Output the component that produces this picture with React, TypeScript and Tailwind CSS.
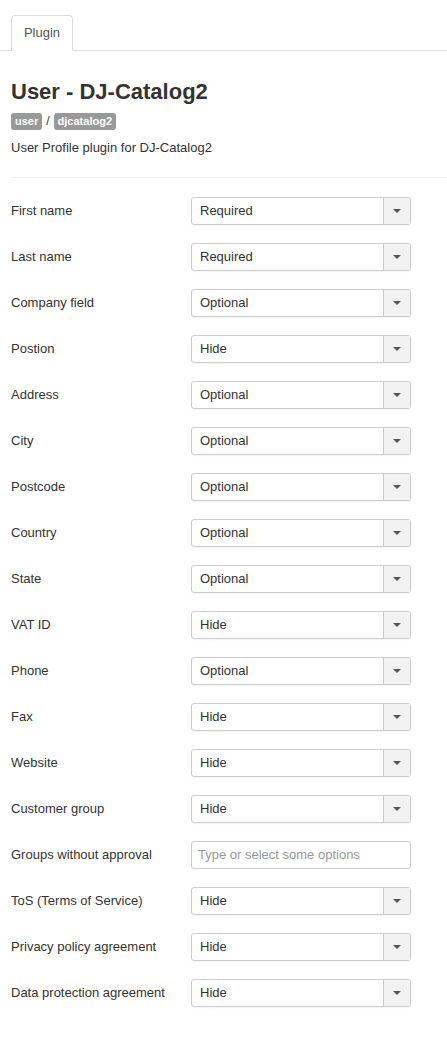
import React from "react";

const fields: { label: string; value: string; multi?: boolean }[] = [
  { label: "First name", value: "Required" },
  { label: "Last name", value: "Required" },
  { label: "Company field", value: "Optional" },
  { label: "Postion", value: "Hide" },
  { label: "Address", value: "Optional" },
  { label: "City", value: "Optional" },
  { label: "Postcode", value: "Optional" },
  { label: "Country", value: "Optional" },
  { label: "State", value: "Optional" },
  { label: "VAT ID", value: "Hide" },
  { label: "Phone", value: "Optional" },
  { label: "Fax", value: "Hide" },
  { label: "Website", value: "Hide" },
  { label: "Customer group", value: "Hide" },
  { label: "Groups without approval", value: "", multi: true },
  { label: "ToS (Terms of Service)", value: "Hide" },
  { label: "Privacy policy agreement", value: "Hide" },
  { label: "Data protection agreement", value: "Hide" },
];

function SelectBox({ value }: { value: string }) {
  return (
    <div className="flex h-[28px] w-[220px] rounded-[3px] border border-[#cccccc] bg-white shadow-[0_1px_2px_rgba(0,0,0,0.05)]">
      <div className="flex flex-1 items-center px-[8px] text-[13px] text-[#333]">{value}</div>
      <div className="flex w-[27px] items-center justify-center border-l border-[#cccccc] bg-[#f2f2f2]">
        <svg width="8" height="4" viewBox="0 0 8 4">
          <path d="M0 0h8L4 4z" fill="#555" />
        </svg>
      </div>
    </div>
  );
}

export default function App() {
  return (
    <div className="min-h-[1061px] bg-white font-['Liberation_Sans',Arial,sans-serif] text-[#333]">
      <div className="flex border-b border-[#dddddd] pl-[11px] pt-[15px]">
        <div className="-mb-px flex h-[36px] w-[62px] items-center justify-center rounded-t-[4px] border border-b-white border-[#dddddd] bg-white text-[13px] text-[#555]">
          Plugin
        </div>
      </div>

      <div className="px-[11px]">
        <h2 className="mt-[28px] text-[22px] font-bold leading-[26px] text-[#333]">User - DJ-Catalog2</h2>
        <div className="mt-[7px] flex items-center gap-[4px] text-[12px]">
          <span className="rounded-[3px] bg-[#999] px-[4px] text-[11px] font-bold leading-[17px] text-white">user</span>
          <span className="text-[#333]">/</span>
          <span className="rounded-[3px] bg-[#999] px-[4px] text-[11px] font-bold leading-[17px] text-white">djcatalog2</span>
        </div>
        <p className="mt-[10px] text-[13px] leading-[16px] text-[#333]">User Profile plugin for DJ-Catalog2</p>
        <div className="-mr-[11px] mt-[21px] border-t border-[#eeeeee]" />

        <div className="mt-[19px] flex flex-col gap-[18px]">
          {fields.map((f) => (
            <div key={f.label} className="flex items-center">
              <div className="w-[180px] text-[13px] text-[#333]">{f.label}</div>
              {f.multi ? (
                <div className="flex h-[28px] w-[220px] items-center rounded-[3px] border border-[#cccccc] bg-white px-[6px] text-[13px] text-[#999]">
                  Type or select some options
                </div>
              ) : (
                <SelectBox value={f.value} />
              )}
            </div>
          ))}
        </div>
      </div>
    </div>
  );
}
